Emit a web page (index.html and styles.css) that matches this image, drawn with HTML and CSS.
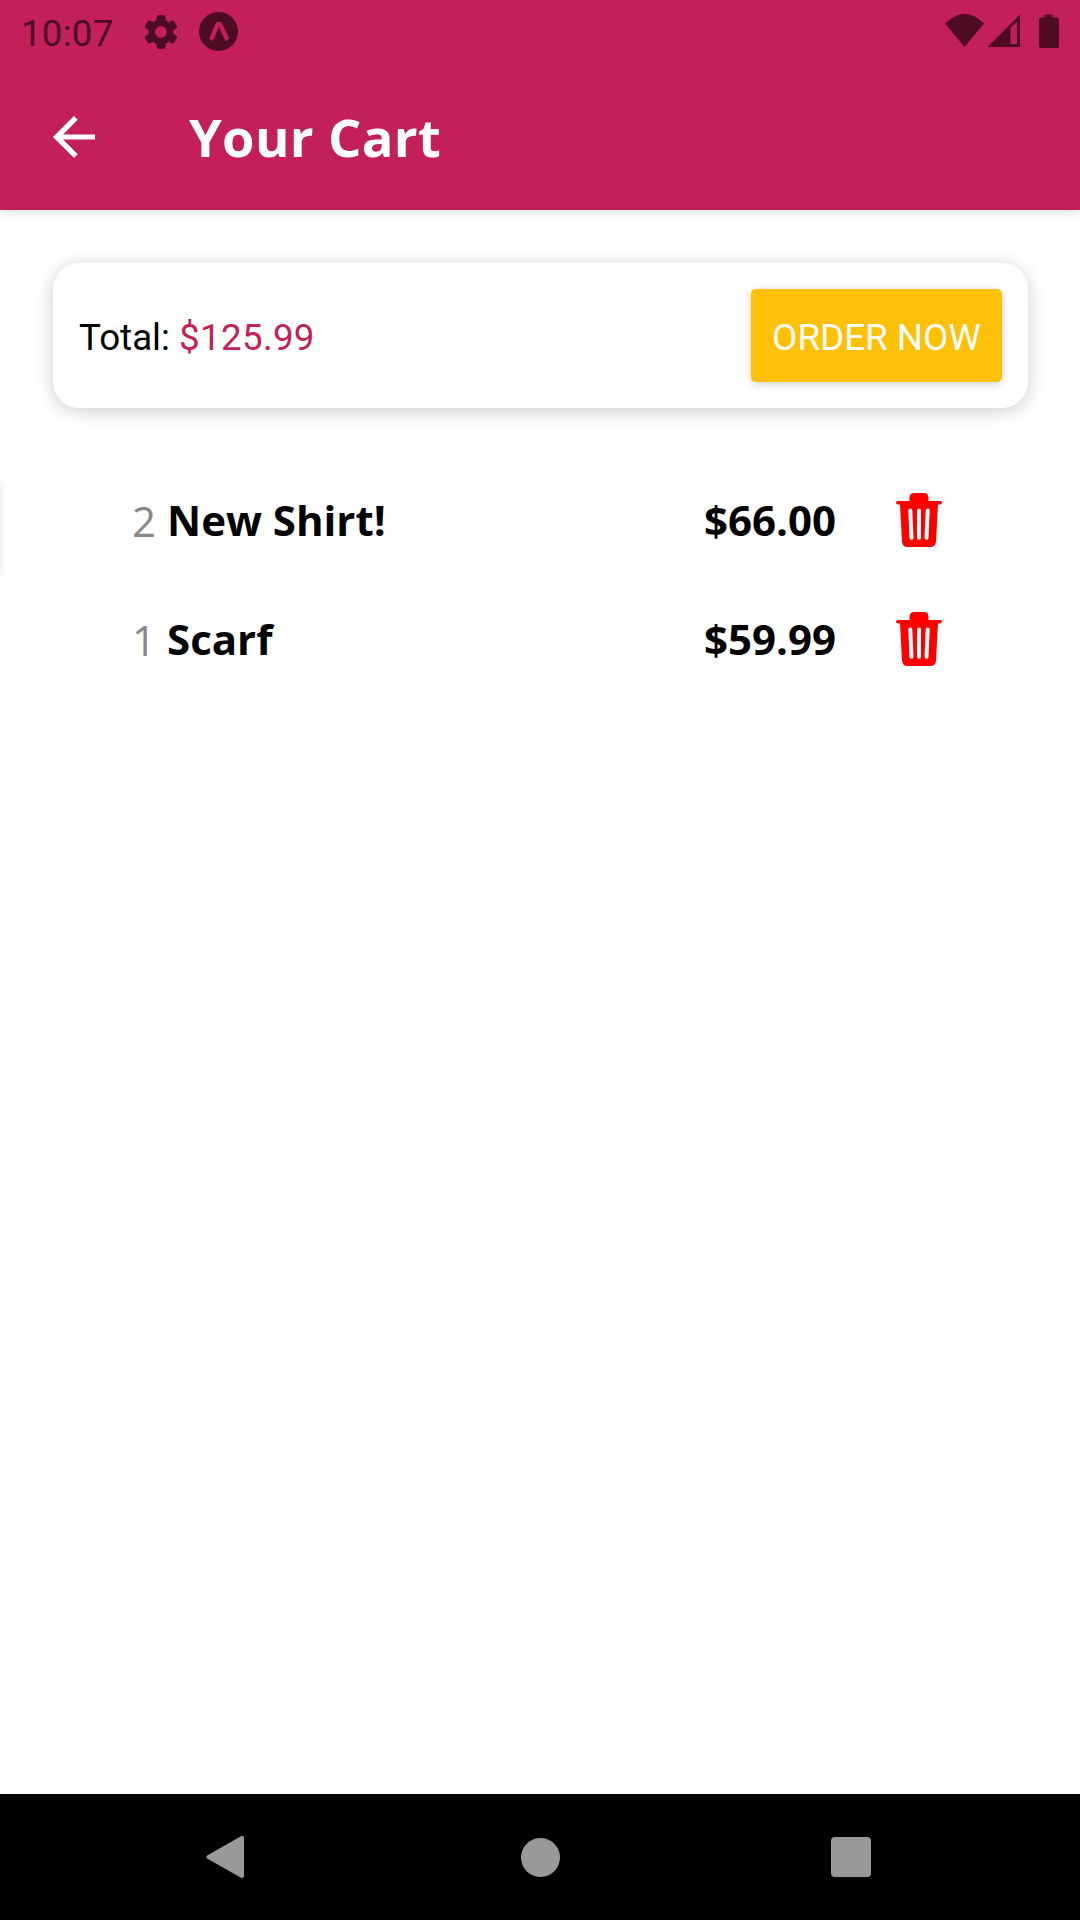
FILE: index.html
```html
<!DOCTYPE html>
<html lang="en">
<head>
<meta charset="utf-8">
<title>Your Cart</title>
<link rel="stylesheet" href="styles.css">
</head>
<body>
<div class="screen">
  <header class="app-bar">
    <div class="status-bar">
      <span class="clock">10:07</span>
      <svg class="gear" width="40" height="40" viewBox="0 0 24 24"><path d="M19.43 12.98c.04-.32.07-.64.07-.98s-.03-.66-.07-.98l2.11-1.65c.19-.15.24-.42.12-.64l-2-3.46c-.12-.22-.39-.3-.61-.22l-2.49 1c-.52-.4-1.08-.73-1.69-.98l-.38-2.65C14.46 2.18 14.25 2 14 2h-4c-.25 0-.46.18-.49.42l-.38 2.65c-.61.25-1.17.59-1.69.98l-2.49-1c-.23-.09-.49 0-.61.22l-2 3.46c-.13.22-.07.49.12.64l2.11 1.65c-.04.32-.07.65-.07.98s.03.66.07.98l-2.11 1.65c-.19.15-.24.42-.12.64l2 3.46c.12.22.39.3.61.22l2.49-1c.52.4 1.08.73 1.69.98l.38 2.65c.03.24.24.42.49.42h4c.25 0 .46-.18.49-.42l.38-2.65c.61-.25 1.17-.59 1.69-.98l2.49 1c.23.09.49 0 .61-.22l2-3.46c.12-.22.07-.49-.12-.64l-2.11-1.65zM12 15.5c-1.930 0-3.500-1.570-3.500-3.500s1.570-3.500 3.500-3.500 3.500 1.570 3.500 3.500-1.570 3.500-3.500 3.500z"/></svg>
      <svg class="expo" width="39" height="39" viewBox="0 0 39 39"><circle cx="19.500" cy="19.500" r="19.500"/><path class="expo-mark" d="M17.200 10h5.200L30.300 26.600L26.600 29L20 14.800L13.800 29L10.300 26.600z"/></svg>
      <svg class="signals" width="116" height="36" viewBox="0 0 116 36">
        <path d="M0 9.500Q19.500-9.500 39 9.500L19.500 33z"/>
        <path fill-rule="evenodd" d="M75 .5V33H42.500zM72 7.500L65.500 14V30H72z"/>
        <path d="M95.500 3.500h4V.500h8v3h4q2.500 0 2.500 2.500v26q0 2-2 2h-16q-2 0-2-2V6q0-2.500 1.500-2.500z"/>
      </svg>
    </div>
    <div class="title-bar">
      <svg class="back" width="42" height="42" viewBox="0 0 42 42"><path d="M42 18.400V23.600H10.100L24.700 38.300L21 42L0 21L21 0L24.700 3.700L10.100 18.400z"/></svg>
      <h1 class="title">Your Cart</h1>
    </div>
  </header>
  <main class="content">
    <section class="summary">
      <p class="total">Total: <span class="amount">$125.99</span></p>
      <button class="order">ORDER NOW</button>
    </section>
    <ul class="items">
      <li class="item">
        <span class="qty">2</span><span class="name">New Shirt!</span><span class="price">$66.00</span>
        <svg class="trash" width="46" height="54" viewBox="0 0 46 54"><path d="M13.500 8V5Q13.500 0 18.500 0H27.500Q32.500 0 32.500 5V8H44Q46 8 46 9.800T44 11.600H42L40 48.500Q39.500 54 34.500 54H11.500Q6.500 54 6 48.500L4 11.600H2Q0 11.600 0 9.800T2 8z"/><path class="slots" d="M14.300 17.500L15.500 44.800M23 17.500V44.800M31.700 17.500L30.500 44.800"/></svg>
      </li>
      <li class="item">
        <span class="qty">1</span><span class="name">Scarf</span><span class="price">$59.99</span>
        <svg class="trash" width="46" height="54" viewBox="0 0 46 54"><path d="M13.500 8V5Q13.500 0 18.500 0H27.500Q32.500 0 32.500 5V8H44Q46 8 46 9.800T44 11.600H42L40 48.500Q39.500 54 34.500 54H11.500Q6.500 54 6 48.500L4 11.600H2Q0 11.600 0 9.800T2 8z"/><path class="slots" d="M14.300 17.500L15.500 44.800M23 17.500V44.800M31.700 17.500L30.500 44.800"/></svg>
      </li>
    </ul>
    <div class="drawer-edge"></div>
  </main>
  <nav class="nav-bar">
    <svg class="nav-back" width="38" height="42" viewBox="0 0 38 42"><path d="M36 2V40L2.500 21z"/></svg>
    <span class="nav-home"></span>
    <span class="nav-recent"></span>
  </nav>
</div>
</body>
</html>
```
FILE: styles.css
```css
* { box-sizing: border-box; }

body {
  margin: 0;
  background: #fff;
  font-family: Roboto, sans-serif;
}

.screen {
  display: flex;
  flex-direction: column;
  width: 1080px;
  height: 1920px;
  overflow: hidden;
}

.app-bar {
  height: 210px;
  background: #c21f5b;
  box-shadow: 0 2px 10px rgba(0, 0, 0, 0.13);
  z-index: 1;
}

.status-bar {
  display: flex;
  height: 63px;
  padding: 0 19px 0 21px;
  fill: #4e0c24;
}

.clock {
  width: 120px;
  color: #4e0c24;
  font-size: 36.75px;
  letter-spacing: 0.2px;
  line-height: 68px;
}

.gear { margin-top: 12px; }
.expo { margin: 12px 0 0 18px; }
.expo-mark { fill: #c21f5b; }
.signals { margin: 14px 0 0 auto; }

.title-bar {
  display: flex;
  align-items: center;
  height: 147px;
  padding-left: 52.5px;
}

.back { fill: #fff; }

.title {
  margin: 0 0 0 94.5px;
  color: #fff;
  font: 700 52.5px/72px "Open Sans", sans-serif;
  letter-spacing: 0.35px;
}

.content {
  position: relative;
  flex: 1;
  padding: 53px 52px 0 53px;
}

.summary {
  display: flex;
  align-items: center;
  justify-content: space-between;
  height: 145px;
  padding: 0 26px;
  border-radius: 26px;
  background: #fff;
  box-shadow: 0 3px 18px rgba(0, 0, 0, 0.2);
}

.total {
  margin: 0;
  padding-top: 4px;
  font-size: 36.75px;
  line-height: 43px;
}

.amount {
  color: #c21f5b;
  letter-spacing: 0.3px;
}

.order {
  width: 251px;
  height: 93px;
  padding: 4px 0 0;
  border: 0;
  border-radius: 5px;
  background: #ffc107;
  box-shadow: 0 2px 8px rgba(0, 0, 0, 0.18);
  color: #fff;
  font: 36.75px/43px Roboto, sans-serif;
}

.items {
  margin: 52px 0 0;
  padding: 0;
  list-style: none;
}

.item {
  display: flex;
  align-items: center;
  height: 119px;
  padding: 0 86px 0 79px;
  font: 42px/57px "Open Sans", sans-serif;
}

.qty {
  width: 35px;
  padding-top: 1px;
  color: #888;
  font-weight: 370;
}

.name, .price { font-weight: 700; }
.price { margin-left: auto; }

.trash {
  margin: 1px 0 0 60px;
  fill: #f00;
}

.slots {
  fill: none;
  stroke: #fff;
  stroke-width: 4;
  stroke-linecap: round;
}

/* Sliver of shadow from the off-screen drawer */
.drawer-edge {
  position: absolute;
  left: -11px;
  top: 270px;
  width: 10px;
  height: 94px;
  box-shadow: 0 2px 8px rgba(0, 0, 0, 0.14);
}

.nav-bar {
  display: flex;
  align-items: center;
  justify-content: space-between;
  height: 126px;
  padding: 0 209px 0 206px;
  background: #000;
}

.nav-back {
  fill: #999;
  stroke: #999;
  stroke-width: 4;
  stroke-linejoin: round;
}

.nav-home {
  width: 39px;
  height: 39px;
  margin-left: 5px;
  border-radius: 50%;
  background: #999;
}

.nav-recent {
  width: 40px;
  height: 40px;
  border-radius: 4px;
  background: #999;
}
```
